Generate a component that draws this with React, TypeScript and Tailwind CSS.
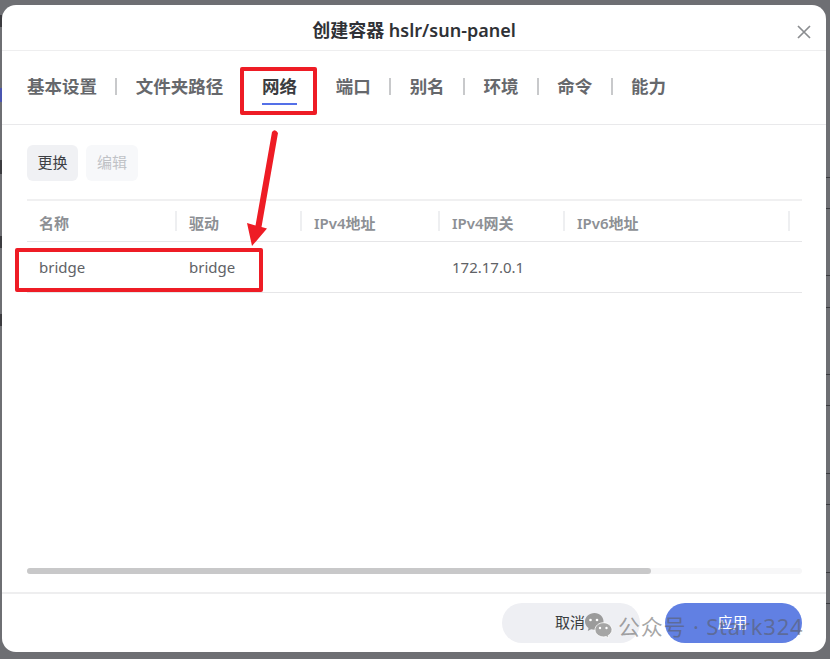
const sans = "font-['Noto_Sans','Noto_Sans_CJK_SC',sans-serif]";

const tabs = ["基本设置", "文件夹路径", "网络", "端口", "别名", "环境", "命令", "能力"];
const rightLines = [177, 208, 275, 307, 374, 405, 473, 504, 572, 603];
const leftMarks = [
  { top: 15, h: 12, c: "bg-[#3c3c40]" },
  { top: 88, h: 14, c: "bg-[#4a55b0]" },
  { top: 160, h: 14, c: "bg-[#3c3c40]" },
  { top: 236, h: 12, c: "bg-[#3c3c40]" },
  { top: 314, h: 12, c: "bg-[#3c3c40]" },
];

function Head({ w, label }: { w: string; label: string }) {
  return (
    <div className={`${w} flex h-10 items-center justify-between pl-3`}>
      <span className="pt-1 text-[15px] font-semibold leading-5 text-[#8d9095]">{label}</span>
      <span className="h-5 w-0.5 bg-[#eeeff1]" />
    </div>
  );
}

function Cell({ w, label }: { w: string; label?: string }) {
  return (
    <div className={`${w} flex h-[50px] items-center pl-3 text-[15px] text-[#606266]`}>{label}</div>
  );
}

export default function App() {
  return (
    <div className={`relative h-[659px] w-[830px] overflow-hidden bg-[#6e6f73] pb-[7px] pl-[2px] pr-1 pt-[5px] ${sans}`}>
      {/* page behind the dialog */}
      {rightLines.map((y) => (
        <div key={y} className="absolute right-0 h-px w-1" style={{ top: y, backgroundColor: "#3a3b3e" }} />
      ))}
      {leftMarks.map((m) => (
        <div key={m.top} className={`absolute left-0 w-0.5 ${m.c}`} style={{ top: m.top, height: m.h }} />
      ))}

      <div className="relative flex h-full flex-col rounded-[14px] bg-white">
        <header className="relative flex h-[46px] shrink-0 items-center justify-center border-b border-[#eeeeef] pt-[5px]">
          <h1 className="text-[18px] font-semibold leading-6 text-[#2f3136]">创建容器 hslr/sun-panel</h1>
          <svg className="absolute right-[14px] top-[19px] h-4 w-4 text-[#8b8d90]" viewBox="0 0 16 16" fill="none" stroke="currentColor" strokeWidth="1.7">
            <path d="M2 2l12 12M14 2L2 14" />
          </svg>
        </header>

        <nav className="flex h-[74px] shrink-0 items-start border-b border-[#e9e9eb] pl-[25px] pt-[25px]">
          {tabs.map((t, i) => (
            <div key={t} className="flex items-center">
              <div className="relative">
                <span className={`block text-[17.5px] font-semibold leading-[21px] ${i === 2 ? "text-[#3a3c40]" : "text-[#66686c]"}`}>{t}</span>
                {i === 2 && <span className="absolute -bottom-[8px] left-0 right-0 h-0.5 bg-[#5470e8]" />}
              </div>
              {i < tabs.length - 1 && (
                <span className="mx-[18.4px] h-[17px] w-0.5 bg-[#c8c9cb]" />
              )}
            </div>
          ))}
        </nav>

        <main className="flex min-h-0 flex-1 flex-col px-[25px] pt-5">
          <div className="flex gap-2">
            <button className="h-9 w-[51px] rounded-md bg-[#f0f1f4] pb-[2px] text-[15px] text-[#3d3f44]">更换</button>
            <button className="h-9 w-[52px] rounded-md bg-[#f7f8fa] pb-[2px] text-[15px] text-[#c0c2c6]">编辑</button>
          </div>

          <div className="mr-[-1px] mt-[18px] border-t-2 border-[#f0f0f1]">
            <div className="flex border-b border-[#e6e6e8]">
              <Head w="w-[150px]" label="名称" />
              <Head w="w-[125px]" label="驱动" />
              <Head w="w-[138px]" label="IPv4地址" />
              <Head w="w-[125px]" label="IPv4网关" />
              <Head w="w-[225px]" label="IPv6地址" />
            </div>
            <div className="flex border-b border-[#e6e6e8]">
              <Cell w="w-[150px]" label="bridge" />
              <Cell w="w-[125px]" label="bridge" />
              <Cell w="w-[138px]" />
              <Cell w="w-[125px]" label="172.17.0.1" />
              <Cell w="w-[225px]" />
            </div>
          </div>

          <div className="mr-[-1px] mt-auto mb-[18px] h-1.5 rounded-full bg-[#f7f7f8]">
            <div className="h-full w-[624px] rounded-full bg-[#c8c8c9]" />
          </div>
        </main>

        <footer className="flex h-[60px] shrink-0 justify-end gap-[25px] border-t-2 border-[#eeeeef] pr-[24px] pt-[9px]">
          <button className="h-10 w-[138px] rounded-full bg-[#eeeff3] pb-[2px] pr-[2px] text-[15px] text-[#3a3c40]">取消</button>
          <button className="h-10 w-[137px] rounded-full bg-[#6180e3] pb-[2px] pr-[2px] text-[15px] text-white">应用</button>
        </footer>
      </div>

      {/* red annotations */}
      <div className="absolute left-[240px] top-[67px] h-[48px] w-[77px] rounded-[2px] border-4 border-[#ee1c25]" />
      <div className="absolute left-[15px] top-[248px] h-[44px] w-[248px] rounded-[2px] border-4 border-[#ee1c25]" />
      <svg className="absolute left-[240px] top-[125px]" width="50" height="125" viewBox="0 0 50 125" fill="#ee1c25">
        <path d="M32 7 Q35 3 38 8 L21.500 102 L27 103.500 L12 121 L7 98 L15.500 100.500 Z" />
      </svg>

      {/* watermark */}
      <div className="absolute left-[584px] top-[611px] flex h-[30px] items-center text-[#5a5a5a]/55">
        <svg width="30" height="30" viewBox="0 0 30 30">
          <path fill="#9b9b9b" d="M10.500 2C5.200 2 1 5.800 1 10.500c0 2.600 1.300 4.900 3.500 6.400L3.800 20l3.300-1.800c1.100.3 2.200.5 3.400.5 5 0 9-3.800 9-8.200C19.500 5.800 15.700 2 10.500 2z" />
          <path fill="#a5a5a5" stroke="#ffffff" strokeWidth="0.8" d="M28 18.800c0-3.900-3.900-7.100-8.500-7.100S11 14.900 11 18.800s3.900 7.100 8.500 7.100c.9 0 1.800-.1 2.700-.4l2.600 1.500-.7-2.400c2.400-1.300 3.900-3.500 3.900-5.800z" />
          <circle cx="6.500" cy="9" r="1.300" fill="#fff" />
          <circle cx="13" cy="9" r="1.300" fill="#fff" />
          <circle cx="16" cy="17" r="1.200" fill="#fff" />
          <circle cx="22.500" cy="17" r="1.200" fill="#fff" />
        </svg>
        <span className="ml-1 text-[22px] leading-none tracking-[0.8px]">公众号 · Stark324</span>
      </div>
    </div>
  );
}
